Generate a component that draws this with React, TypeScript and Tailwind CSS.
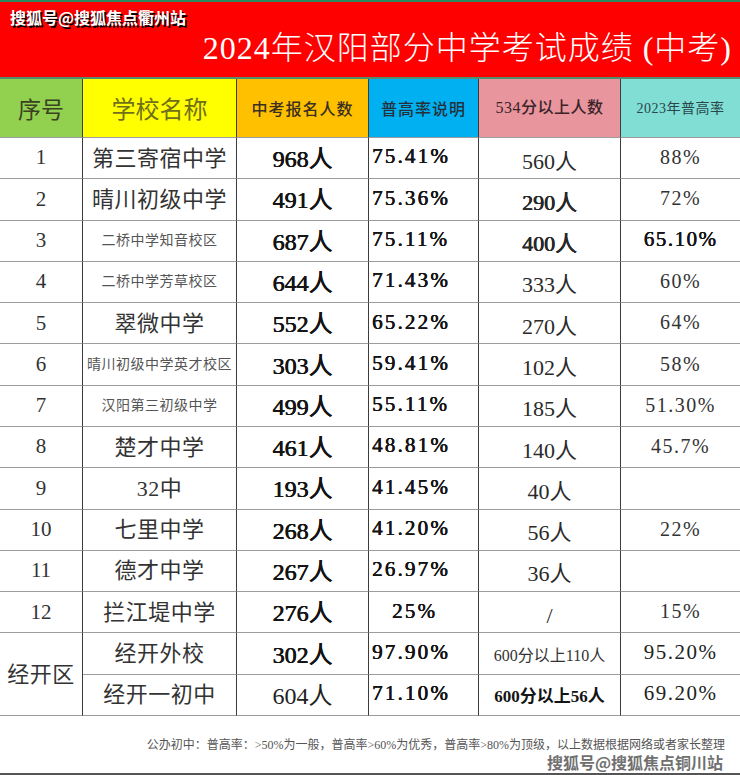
import React from 'react'

type Row = {
  no: string
  name: string
  small?: boolean
  count: string
  rate: string
  rateIndent?: boolean
  above: string
  aboveBold?: boolean
  prev: string
  prevBold?: boolean
}

const rows: Row[] = [
  { no: '1', name: '第三寄宿中学', count: '968人', rate: '75.41%', above: '560人', prev: '88%' },
  { no: '2', name: '晴川初级中学', count: '491人', rate: '75.36%', above: '290人', aboveBold: true, prev: '72%' },
  { no: '3', name: '二桥中学知音校区', small: true, count: '687人', rate: '75.11%', above: '400人', aboveBold: true, prev: '65.10%', prevBold: true },
  { no: '4', name: '二桥中学芳草校区', small: true, count: '644人', rate: '71.43%', above: '333人', prev: '60%' },
  { no: '5', name: '翠微中学', count: '552人', rate: '65.22%', above: '270人', prev: '64%' },
  { no: '6', name: '晴川初级中学英才校区', small: true, count: '303人', rate: '59.41%', above: '102人', prev: '58%' },
  { no: '7', name: '汉阳第三初级中学', small: true, count: '499人', rate: '55.11%', above: '185人', prev: '51.30%' },
  { no: '8', name: '楚才中学', count: '461人', rate: '48.81%', above: '140人', prev: '45.7%' },
  { no: '9', name: '32中', count: '193人', rate: '41.45%', above: '40人', prev: '' },
  { no: '10', name: '七里中学', count: '268人', rate: '41.20%', above: '56人', prev: '22%' },
  { no: '11', name: '德才中学', count: '267人', rate: '26.97%', above: '36人', prev: '' },
  { no: '12', name: '拦江堤中学', count: '276人', rate: '25%', rateIndent: true, above: '/', prev: '15%' },
]

const serif = { fontFamily: '"Liberation Serif", "Noto Sans CJK SC", serif' }
const cjk = { fontFamily: '"Noto Sans CJK SC", sans-serif' }

const cell = 'flex items-center border-r border-b border-r-[#3c3c3c] border-b-[#9c9c9c] bg-white'
// medium-weight look: regular face thickened a touch
const thick = '[text-shadow:0.4px_0_0_#141414,0_0.2px_0_#141414]'

export default function App() {
  return (
    <div className="w-[740px] h-[775px] bg-white overflow-hidden" style={serif}>
      <div className="h-[79px] border-t-2 border-b-2 border-t-[#2b8a5c] border-b-[#4f8e6e] bg-[#ff0000] flex flex-col">
        <div
          className="pl-[10px] pt-[5px] text-[16px] font-bold leading-[20px] text-white"
          style={{ ...cjk, textShadow: '1.5px 1.5px 0 #000' }}
        >
          搜狐号@搜狐焦点衢州站
        </div>
        <div className="flex justify-end pr-[8px] pt-[1px]">
          <span className="text-[32px] leading-[40px] text-white font-light tracking-[1px]">
            2024年汉阳部分中学考试成绩 (中考)
          </span>
        </div>
      </div>

      <div className="grid h-[637px] grid-cols-[83px_154px_132px_110px_142px_119px] grid-rows-[59px_repeat(14,minmax(0,1fr))]">
        <div className={`${cell} justify-center !bg-[#92d050] text-[23px] text-[#3a4222]`} style={cjk}>序号</div>
        <div className={`${cell} justify-center !bg-[#ffff00] text-[24px] text-[#707018]`} style={cjk}>学校名称</div>
        <div className={`${cell} justify-center !bg-[#ffc000] text-[16px] text-[#3b3020] font-medium tracking-[1px]`} style={cjk}>中考报名人数</div>
        <div className={`${cell} justify-center !bg-[#00b0f0] text-[16px] text-[#22313c] font-medium tracking-[1px]`} style={cjk}>普高率说明</div>
        <div className={`${cell} justify-center !bg-[#e9959e] text-[16px] text-[#3a2428] font-medium tracking-[0.5px]`}>534分以上人数</div>
        <div className={`${cell} justify-center !bg-[#80ded5] text-[14px] text-[#29474a] tracking-[0.5px] border-r-0`}>2023年普高率</div>

        {rows.map((r) => (
          <React.Fragment key={r.no}>
            <div className={`${cell} justify-center text-[21px] text-[#333]`}>{r.no}</div>
            <div
              className={`${cell} justify-center ${r.small ? 'text-[14px] text-[#555] tracking-[0.5px]' : 'text-[22px] text-[#333] tracking-[0.5px]'}`}
            >
              {r.name}
            </div>
            <div className={`${cell} justify-center pt-[2px] text-[24px] text-[#141414] ${thick}`}>{r.count}</div>
            <div
              className={`${cell} ${r.rateIndent ? 'pl-[23px]' : 'pl-[3px]'} pb-[2px] text-[21px] tracking-[2.2px] text-[#141414] ${thick}`}
            >
              {r.rate}
            </div>
            <div className={`${cell} justify-center pt-[6px] text-[22px] text-[#2a2a2a] ${r.aboveBold ? thick : ''}`}>
              {r.above}
            </div>
            <div
              className={`${cell} justify-center pb-[2px] text-[20px] tracking-[1.5px] border-r-0 ${r.prevBold ? `text-[21px] text-[#141414] ${thick}` : 'text-[#333]'}`}
            >
              {r.prev}
            </div>
          </React.Fragment>
        ))}

        <div className={`${cell} row-span-2 justify-center text-[22px] text-[#333] tracking-[0.5px]`}>经开区</div>
        <div className={`${cell} justify-center text-[22px] text-[#333] tracking-[0.5px]`}>经开外校</div>
        <div className={`${cell} justify-center pt-[2px] text-[24px] text-[#141414] ${thick}`}>302人</div>
        <div className={`${cell} pl-[3px] pb-[2px] text-[21px] tracking-[2.2px] text-[#141414] ${thick}`}>97.90%</div>
        <div className={`${cell} justify-center pt-[4px] text-[16px] text-[#333]`}>600分以上110人</div>
        <div className={`${cell} justify-center pb-[2px] text-[21px] tracking-[1.5px] text-[#222] border-r-0`}>95.20%</div>

        <div className={`${cell} justify-center text-[22px] text-[#333] tracking-[0.5px]`}>经开一初中</div>
        <div className={`${cell} justify-center pt-[2px] text-[24px] text-[#222]`}>604人</div>
        <div className={`${cell} pl-[3px] pb-[2px] text-[21px] tracking-[2.2px] text-[#141414] ${thick}`}>71.10%</div>
        <div className={`${cell} justify-center pt-[4px] text-[17px] font-bold text-[#141414]`}>600分以上56人</div>
        <div className={`${cell} justify-center pb-[2px] text-[21px] tracking-[1.5px] text-[#222] border-r-0`}>69.20%</div>
      </div>

      <div className="h-[59px] border-b-2 border-b-[#555] flex flex-col items-end pr-[15px] pt-[22px]">
        <div className="text-[12px] leading-[14px] text-[#555] whitespace-nowrap">
          公办初中：普高率：&gt;50%为一般，普高率&gt;60%为优秀，普高率&gt;80%为顶级，以上数据根据网络或者家长整理
        </div>
        <div className="pr-[2px] text-[16px] font-bold leading-[20px] text-[#707070]" style={cjk}>
          搜狐号@搜狐焦点铜川站
        </div>
      </div>
    </div>
  )
}
